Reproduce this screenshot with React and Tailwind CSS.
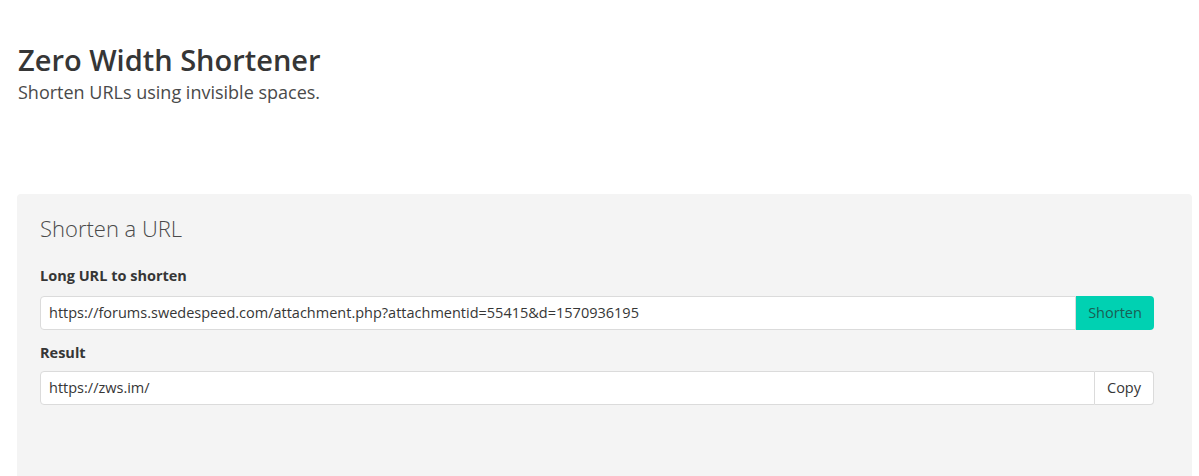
import { useState } from 'react';

function App() {
  const [url, setUrl] = useState('https://forums.swedespeed.com/attachment.php?attachmentid=55415&d=1570936195');
  const [result] = useState('https://zws.im/');

  return (
    <div className="min-h-screen bg-white text-[#363636] font-['Open_Sans',sans-serif]">
      <section className="pl-[18px] pt-[42px] pb-[90px]">
        <h1 className="text-[29px] leading-[36px] font-semibold text-[#363636]">Zero Width Shortener</h1>
        <h2 className="mt-[2px] text-[18px] leading-[24px] text-[#4a4a4a]">Shorten URLs using invisible spaces.</h2>
      </section>
      <div className="ml-[17px] mr-[7px] h-[300px] rounded-[4px] bg-[#f4f4f4] pl-[23px] pr-[38px] pt-[18px]">
        <h3 className="text-[22px] leading-[32px] font-light text-[#4a4a4a]">Shorten a URL</h3>
        <label className="mt-[22px] block text-[14.5px] leading-[20px] font-bold text-[#363636]">Long URL to shorten</label>
        <div className="mt-[10px] flex h-[34px]">
          <input
            value={url}
            onChange={(e) => setUrl(e.target.value)}
            className="min-w-0 flex-1 rounded-l-[4px] border border-[#dbdbdb] bg-white px-[8px] text-[14.5px] text-[#363636] outline-none"
          />
          <button className="w-[78px] rounded-r-[4px] bg-[#00d1b2] text-[14.5px] text-[#1a5f55]">Shorten</button>
        </div>
        <label className="mt-[13px] block text-[14.5px] leading-[20px] font-bold text-[#363636]">Result</label>
        <div className="mt-[8px] flex h-[34px]">
          <input
            readOnly
            value={result}
            className="min-w-0 flex-1 rounded-l-[4px] border border-[#dbdbdb] bg-white px-[8px] text-[14.5px] text-[#363636] outline-none"
          />
          <button className="w-[59px] rounded-r-[4px] border border-l-0 border-[#dbdbdb] bg-white text-[14.5px] text-[#363636]">Copy</button>
        </div>
      </div>
    </div>
  );
}

export default App;
